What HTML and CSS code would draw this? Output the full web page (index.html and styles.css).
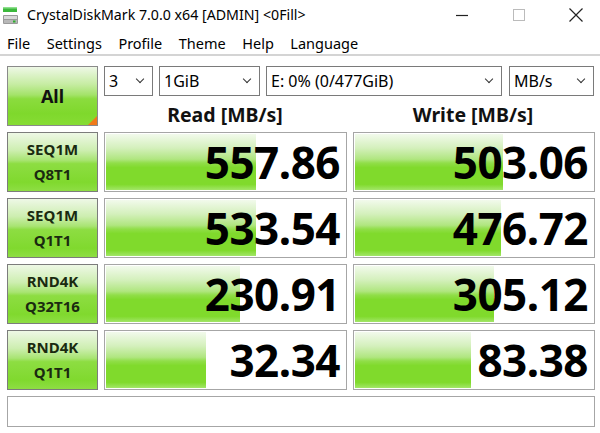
FILE: index.html
```html
<!DOCTYPE html>
<html>
<head>
<meta charset="utf-8">
<link rel="stylesheet" href="styles.css">
</head>
<body>
<div class="window">
  <div class="titlebar">
    <svg class="appicon" width="18" height="20" viewBox="0 0 18 20">
      <rect x="2" y="2" width="14" height="5" fill="#3cb83c"/>
      <rect x="2" y="2" width="14" height="1.5" fill="#8de08d"/>
      <rect x="2" y="10" width="15" height="9" rx="1" fill="#9a9a9a"/>
      <rect x="3" y="11" width="13" height="3" fill="#d8d8d8"/>
      <rect x="3" y="15" width="13" height="3" fill="#b8b8b8"/>
      <rect x="12" y="15.5" width="2.5" height="2" fill="#2fae2f"/>
    </svg>
    <span class="title">CrystalDiskMark 7.0.0 x64 [ADMIN] &lt;0Fill&gt;</span>
    <div class="controls">
      <div class="ctl"><svg width="14" height="14" viewBox="0 0 14 14"><line x1="1" y1="7.5" x2="13" y2="7.5" stroke="#222" stroke-width="1.2"/></svg></div>
      <div class="ctl"><svg width="14" height="14" viewBox="0 0 14 14"><rect x="1.5" y="1.5" width="11" height="11" fill="none" stroke="#bbb" stroke-width="1"/></svg></div>
      <div class="ctl"><svg width="16" height="16" viewBox="0 0 16 16"><path d="M1.5 1.5 L14.5 14.5 M14.5 1.5 L1.5 14.5" stroke="#222" stroke-width="1.2"/></svg></div>
    </div>
  </div>
  <div class="menubar">
    <span>File</span><span>Settings</span><span>Profile</span><span>Theme</span><span>Help</span><span>Language</span>
  </div>
  <div class="main">
    <div class="grid">
      <div class="allbtn">All<span class="corner"></span></div>
      <div class="topcell">
        <div class="selects">
          <div class="sel w1"><span>3</span><i class="chev"></i></div>
          <div class="sel w2"><span>1GiB</span><i class="chev"></i></div>
          <div class="sel w3"><span>E: 0% (0/477GiB)</span><i class="chev"></i></div>
          <div class="sel w4"><span>MB/s</span><i class="chev"></i></div>
        </div>
        <div class="heads">
          <div class="head">Read [MB/s]</div>
          <div class="head">Write [MB/s]</div>
        </div>
      </div>

      <div class="label">SEQ1M<br>Q8T1</div>
      <div class="val"><div class="bar" style="width:62.2%"></div><span class="num">557.86</span></div>
      <div class="val"><div class="bar" style="width:61.7%"></div><span class="num">503.06</span></div>

      <div class="label">SEQ1M<br>Q1T1</div>
      <div class="val"><div class="bar" style="width:62.2%"></div><span class="num">533.54</span></div>
      <div class="val"><div class="bar" style="width:60.8%"></div><span class="num">476.72</span></div>

      <div class="label">RND4K<br>Q32T16</div>
      <div class="val"><div class="bar" style="width:55.6%"></div><span class="num">230.91</span></div>
      <div class="val"><div class="bar" style="width:57.9%"></div><span class="num">305.12</span></div>

      <div class="label">RND4K<br>Q1T1</div>
      <div class="val"><div class="bar" style="width:41.5%"></div><span class="num">32.34</span></div>
      <div class="val"><div class="bar" style="width:48.3%"></div><span class="num">83.38</span></div>
    </div>
    <div class="status"></div>
  </div>
</div>
</body>
</html>
```
FILE: styles.css
```css
html, body {
  margin: 0;
  padding: 0;
  background: #fff;
}
body {
  font-family: "Noto Sans", "Open Sans", sans-serif;
  color: #000;
  width: 600px;
  height: 433px;
  overflow: hidden;
}
.titlebar {
  height: 29px;
  display: flex;
  align-items: center;
}
.appicon {
  margin-left: 1px;
  margin-right: 8px;
}
.title {
  font-size: 14.2px;
  color: #000;
}
.controls {
  margin-left: auto;
  display: flex;
  gap: 11px;
  padding-right: 1px;
}
.ctl {
  width: 46px;
  height: 29px;
  display: flex;
  align-items: center;
  justify-content: center;
}
.menubar {
  display: flex;
  align-items: center;
  gap: 16.5px;
  padding-left: 7px;
  padding-top: 2px;
  box-sizing: border-box;
  height: 27px;
  font-size: 14.5px;
  border-bottom: 2px solid #d4d4d4;
}
.main {
  padding: 10px 5px 0 7px;
}
.grid {
  display: grid;
  grid-template-columns: 91px 243px 242px;
  grid-auto-rows: 60px;
  gap: 6px;
}
.allbtn {
  position: relative;
  border: 1px solid #8a8a8a;
  box-sizing: border-box;
  background: linear-gradient(to bottom, #eef8e6 0%, #c6eca2 30%, #a4e36a 48%, #8bdc3e 55%, #7fd82c 80%, #86dc34 100%);
  display: flex;
  align-items: center;
  justify-content: center;
  font-weight: bold;
  font-size: 18px;
  color: #111;
}
.corner {
  position: absolute;
  right: 0;
  bottom: 0;
  width: 0;
  height: 0;
  border-left: 9px solid transparent;
  border-bottom: 9px solid #f07a1a;
}
.topcell {
  grid-column: 2 / 4;
  display: flex;
  flex-direction: column;
}
.selects {
  display: flex;
  height: 30px;
}
.sel {
  box-sizing: border-box;
  height: 30px;
  border: 1px solid #7a7a7a;
  display: flex;
  align-items: center;
  padding-left: 4px;
  font-size: 16px;
  position: relative;
  margin-right: 6px;
}
.sel.w1 { width: 49px; }
.sel.w2 { width: 101px; }
.sel.w3 { width: 236px; margin-right: 7px; }
.sel.w4 { width: 85px; margin-right: 0; }
.chev {
  margin-left: auto;
  margin-right: 9px;
  width: 5px;
  height: 5px;
  border-right: 1px solid #333;
  border-bottom: 1px solid #333;
  transform: rotate(45deg);
  margin-top: -4px;
}
.heads {
  display: flex;
  gap: 6px;
  flex: 1;
  align-items: flex-end;
}
.head {
  width: 242px;
  text-align: center;
  font-weight: bold;
  font-size: 19.5px;
  line-height: 22px;
  color: #111;
}
.label {
  border: 1px solid #7c7c7c;
  box-sizing: border-box;
  background: linear-gradient(to bottom, #eef8e6 0%, #cdeeb0 30%, #a8e472 47%, #8ddd42 53%, #80d92e 85%, #8ede44 100%);
  display: flex;
  align-items: center;
  justify-content: center;
  text-align: center;
  font-weight: bold;
  font-size: 15px;
  line-height: 25px;
  color: #1a2a10;
}
.val {
  position: relative;
  border: 1px solid #a6a6a6;
  box-sizing: border-box;
  padding: 1px 0 1px 1px;
  display: flex;
  align-items: center;
  justify-content: flex-end;
  overflow: hidden;
}
.bar {
  position: absolute;
  left: 1px;
  top: 1px;
  bottom: 1px;
  background: linear-gradient(to bottom, #f2faec 0%, #d4f0bc 25%, #b0e680 45%, #90de48 52%, #80da2c 60%, #80da2c 90%, #a2e668 100%);
}
.num {
  position: relative;
  font-weight: bold;
  font-size: 44px;
  line-height: 1;
  padding-right: 6px;
  letter-spacing: -0.5px;
  color: #000;
}
.status {
  margin-top: 6px;
  width: 588px;
  height: 31px;
  box-sizing: border-box;
  border: 1px solid #a6a6a6;
}
```
